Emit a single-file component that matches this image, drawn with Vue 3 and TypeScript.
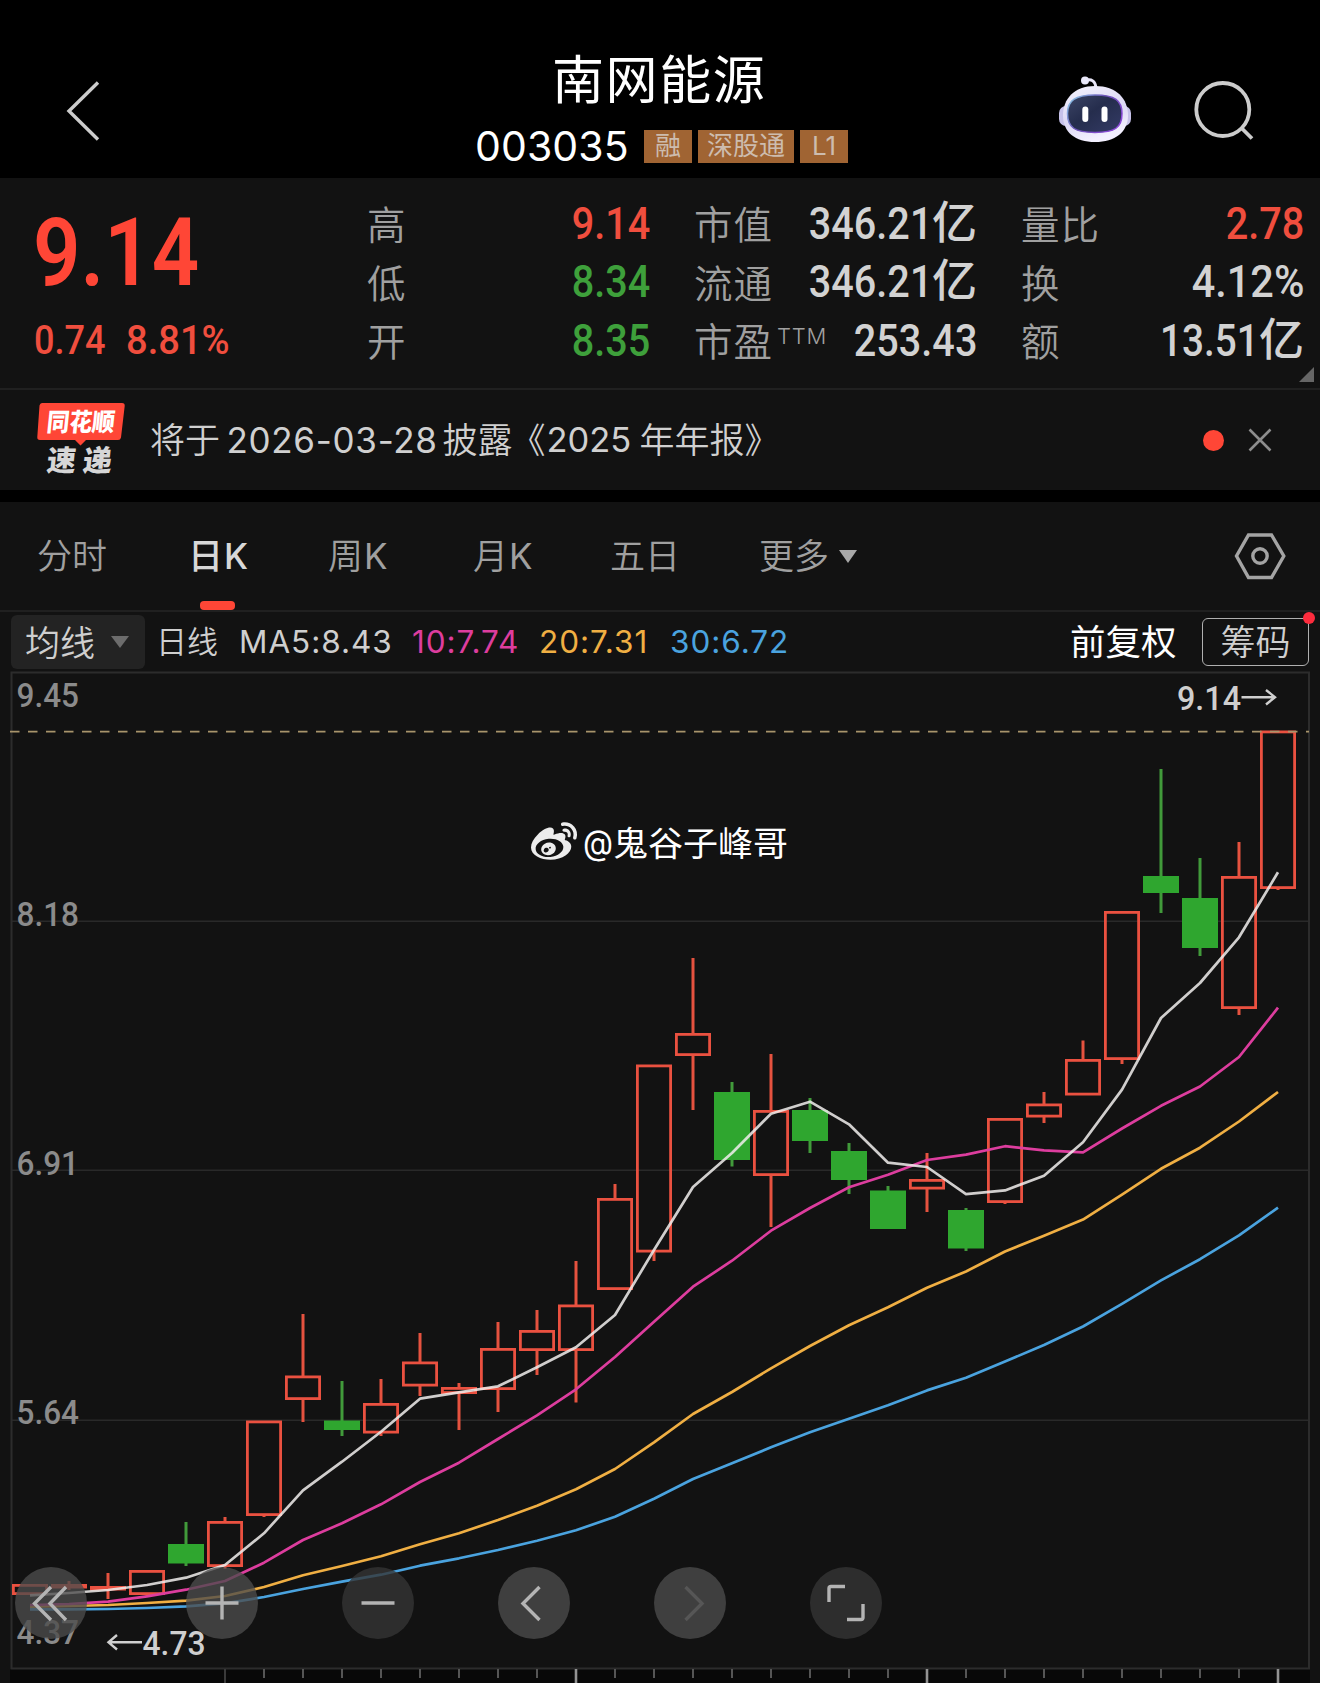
<script setup lang="ts">
interface Stat { label: string; sup?: string; num: string; unit?: string; tone: string; fit?: string }
interface Candle { hi: number; top: number; bottom: number; lo: number; up: boolean }

const statColumns: Stat[][] = [
  [
    { label: '高', num: '9.14', tone: 'red' },
    { label: '低', num: '8.34', tone: 'green' },
    { label: '开', num: '8.35', tone: 'green' },
  ],
  [
    { label: '市值', num: '346.21', unit: '亿', tone: 'plain' },
    { label: '流通', num: '346.21', unit: '亿', tone: 'plain' },
    { label: '市盈', sup: 'TTM', num: '253.43', tone: 'plain' },
  ],
  [
    { label: '量比', num: '2.78', tone: 'red' },
    { label: '换', num: '4.12%', tone: 'plain', fit: 'loose' },
    { label: '额', num: '13.51', unit: '亿', tone: 'plain', fit: 'tight' },
  ],
]

const tabs = [
  { cjk: '分时', latin: '', width: 151 },
  { cjk: '日', latin: 'K', width: 140, active: true },
  { cjk: '周', latin: 'K', width: 145 },
  { cjk: '月', latin: 'K', width: 137 },
  { cjk: '五日', latin: '', width: 149 },
  { cjk: '更多', latin: '', width: 120, more: true },
]

const raw: [number, number, number, number, number][] = [
  [1584, 1584, 1595, 1595, 1], [1581, 1584, 1588.5, 1590, 1], [1573, 1586, 1590.5, 1599, 1],
  [1570, 1570, 1595, 1596, 1], [1522, 1544, 1563.5, 1566, 0], [1517, 1521, 1567, 1569, 1],
  [1421, 1420.5, 1516, 1517, 1], [1314, 1375.5, 1400, 1422, 1], [1381, 1420.5, 1430, 1436, 0],
  [1379, 1403, 1433.5, 1436, 1], [1333, 1361.5, 1386.5, 1396, 1], [1383, 1387, 1394, 1430, 1],
  [1322, 1348, 1390, 1412, 1], [1310, 1330, 1351, 1375, 1], [1261, 1304.5, 1351, 1402.5, 1],
  [1184, 1198, 1290, 1290, 1], [1065, 1064.5, 1252.5, 1261, 1], [958, 1033, 1056, 1110, 1],
  [1082, 1092, 1160, 1166.5, 0], [1054, 1110, 1176, 1227, 1], [1098, 1110, 1141, 1153, 0],
  [1143, 1151, 1180, 1194, 0], [1186, 1190.5, 1229, 1229, 0], [1153, 1179, 1189.5, 1212, 1],
  [1208, 1210, 1248.5, 1251, 0], [1119, 1118, 1203, 1204, 1], [1092, 1103.5, 1117.5, 1123, 1],
  [1040.5, 1059, 1095.5, 1095, 1], [912, 911, 1060, 1064, 1], [769, 876, 893, 913, 0],
  [858, 898, 948, 956, 0], [842, 876, 1009, 1015, 1], [731, 730.5, 889, 890, 1],
]
const candles: Candle[] = raw.map(([hi, top, bottom, lo, up]) => ({ hi, top, bottom, lo, up: up === 1 }))
const cx = (i: number): number => 30 + 39 * i

const averages = [
  { color: '#4aa3df', ys: [1609.3, 1609.3, 1609, 1608, 1606.3, 1603.3, 1597, 1589, 1581.7, 1574.7, 1565.7, 1558.3, 1550, 1540.7, 1530.3, 1516.7, 1498.7, 1479, 1463.3, 1447.3, 1432.3, 1418.7, 1405.3, 1390.4, 1377.7, 1361.5, 1345, 1326.5, 1303.8, 1280.4, 1259.2, 1235.4, 1207.7] },
  { color: '#f0af43', ys: [1606.7, 1606, 1605, 1603, 1600.7, 1596, 1587, 1575.3, 1566, 1556.3, 1544.3, 1533.3, 1520, 1505.7, 1489.3, 1469, 1442.3, 1414, 1392, 1368.3, 1346, 1325.3, 1307.3, 1287.7, 1271.5, 1251.5, 1235.8, 1219.6, 1194.6, 1168.8, 1147.7, 1121.5, 1092] },
  { color: '#dd3d9e', ys: [1605, 1604, 1601.7, 1596.3, 1589.7, 1581, 1562.7, 1540, 1523.3, 1504.3, 1482, 1462.7, 1439, 1415.3, 1389.3, 1357, 1321.7, 1286.7, 1260.7, 1230.7, 1208, 1187.3, 1174.7, 1160, 1154.6, 1146.2, 1150.4, 1152.3, 1128.5, 1105.8, 1086.5, 1057, 1007.7] },
  { color: 'rgba(240,238,236,.86)', ys: [1595.3, 1593, 1590, 1585, 1577.7, 1565, 1533.3, 1490.3, 1461.7, 1431.7, 1398.7, 1392.3, 1386.3, 1367.3, 1347.3, 1315, 1250, 1187, 1153, 1113.7, 1101.7, 1124.3, 1162.7, 1167, 1194.2, 1190.4, 1175.8, 1142.3, 1089.6, 1018, 983, 937.3, 872.3] },
]
const polyline = (ys: number[]): string => ys.map((y, i) => `${cx(i)},${y}`).join(' ')

const axis = [
  { text: '9.45', y: 706.5 }, { text: '8.18', y: 925.5 }, { text: '6.91', y: 1174.8 },
  { text: '5.64', y: 1424 }, { text: '4.37', y: 1644 },
]
const ticks = candles.map((_, i) => i).filter((i) => i > 4)
const tickClass = (i: number): string => (i === 5 ? 'tick first' : [14, 23, 32].includes(i) ? 'tick major' : 'tick')
const tickEnd = (i: number): number => ([5, 14, 23, 32].includes(i) ? 1683 : 1678)

const controls = [
  { x: 51, dark: false, faint: false, d: 'M0 -16L-16.5 0.5L0 17M15 -16L-1 0.5L15 17' },
  { x: 222, dark: false, faint: false, d: 'M-16.5 0H16.5M0 -16.5V16.5' },
  { x: 378, dark: true, faint: false, d: 'M-16.5 0H16.5' },
  { x: 534, dark: false, faint: false, d: 'M5.5 -16L-11 0.5L5.5 17' },
  { x: 690, dark: false, faint: true, d: 'M-4.5 -16L12 0.5L-4.5 17' },
  { x: 846, dark: true, faint: false, d: 'M-17 -1V-14.5Q-17 -16.5 -15 -16.5H-1M17 1V14.5Q17 16.5 15 16.5H1' },
]
</script>

<template>
  <main class="page">
    <header class="top">
      <svg class="back" width="40" height="66" viewBox="62 78 40 66"><path d="M98 82.5L69 111L98 139.5" /></svg>
      <div class="title">
        <h1>南网能源</h1>
        <div class="sub">
          <span class="code">003035</span>
          <span class="badge">融</span>
          <span class="badge wide">深股通</span>
          <span class="badge">L1</span>
        </div>
      </div>
      <div class="actions">
        <svg width="76" height="72" viewBox="1057 74 76 72">
          <defs>
            <linearGradient id="shell" x1="0" y1="0" x2=".35" y2="1">
              <stop offset="0" stop-color="#f4f3fd" /><stop offset=".6" stop-color="#dcd8f4" /><stop offset="1" stop-color="#f3f0ff" />
            </linearGradient>
            <linearGradient id="rim" x1="0" y1="0" x2="1" y2=".6">
              <stop offset="0" stop-color="#8fd5ee" /><stop offset=".5" stop-color="#6d55b8" /><stop offset="1" stop-color="#8b49d8" />
            </linearGradient>
            <linearGradient id="visor" x1="0" y1="0" x2="1" y2="1">
              <stop offset="0" stop-color="#3c4566" /><stop offset=".45" stop-color="#252d4d" /><stop offset="1" stop-color="#343b66" />
            </linearGradient>
          </defs>
          <path d="M1085 80.500Q1095 77.500 1096 88" fill="none" stroke="#e8e6f8" stroke-width="3" />
          <circle cx="1085" cy="80.500" r="4" fill="#e9e8fa" />
          <rect x="1059" y="106" width="72" height="20" rx="7" fill="#c6c1e9" />
          <path d="M1095 86C1117 86 1128 99 1128 115.500C1128 132 1115 142 1095 142C1075 142 1063 132 1063 115.500C1063 99 1074 86 1095 86Z" fill="url(#shell)" />
          <path d="M1095 95C1115 95 1122 100.500 1122 113.500C1122 127.500 1115 132.500 1095 132.500C1075 132.500 1067.500 127.500 1067.500 113.500C1067.500 100.500 1075 95 1095 95Z" fill="url(#visor)" stroke="url(#rim)" stroke-width="1.500" />
          <rect x="1082.300" y="106.500" width="6" height="15.500" rx="3" fill="#fff" /><rect x="1101.500" y="106.500" width="6" height="15.500" rx="3" fill="#fff" />
        </svg>
        <svg class="search" width="64" height="64" viewBox="1192 78 64 64"><circle cx="1222.800" cy="109.500" r="26.500" /><path d="M1242 128.500L1252 138.500" /></svg>
      </div>
    </header>

    <section class="quote">
      <div class="last">
        <div class="price"><span>9.14</span></div>
        <div class="change"><span class="abs">0.74</span><span class="pct">8.81%</span></div>
      </div>
      <div v-for="(col, c) in statColumns" :key="c" class="stats" :class="'col' + c">
        <div v-for="s in col" :key="s.label" class="stat">
          <span class="label">{{ s.label }}<sup v-if="s.sup">{{ s.sup }}</sup></span>
          <span class="value" :class="s.tone"><span class="num" :class="s.fit">{{ s.num }}</span><span v-if="s.unit" class="unit">{{ s.unit }}</span></span>
        </div>
      </div>
      <i class="corner"></i>
    </section>

    <section class="news">
      <div class="logo">
        <svg width="90" height="44" viewBox="36 402 90 44">
          <path d="M42 403H122Q125 403 124.700 406L121 437.500Q120.500 440 118 440H86L80.500 445.500L75 440H40Q37 440 37.300 437L39.500 405.500Q40 403 42 403Z" fill="#ff4636" />
          <text x="47" y="431.500" textLength="68" lengthAdjust="spacingAndGlyphs" transform="skewX(-6)" style="transform-origin:80px 422px">同花顺</text>
        </svg>
        <b>速递</b>
      </div>
      <p class="notice">
        <span class="lead">将于</span><span class="latin date">2026-03-28</span><span class="verb">披露</span><span class="open">《</span><span class="latin year">2025</span><span>年年报》</span>
      </p>
      <i class="dot"></i>
      <svg class="dismiss" width="26" height="26" viewBox="0 0 26 26"><path d="M2.500 2.500L23.500 23.500M23.500 2.500L2.500 23.500" /></svg>
    </section>

    <nav class="tabs">
      <div v-for="t in tabs" :key="t.cjk" class="tab" :class="{ active: t.active }" :style="{ width: t.width + 'px' }">
        <span>{{ t.cjk }}<em v-if="t.latin">{{ t.latin }}</em><i v-if="t.more"></i></span>
      </div>
      <svg class="settings" width="54" height="50" viewBox="1233 531 54 50"><path d="M1248.500 535H1271.500L1283.800 556L1271.500 577.500H1248.500L1236.500 556Z" /><circle cx="1260" cy="556" r="7.200" /></svg>
    </nav>

    <section class="indicator">
      <div class="picker"><span>均线</span><i></i></div>
      <span class="period">日线</span>
      <span class="ma m5">MA5:8.43</span>
      <span class="ma m10">10:7.74</span>
      <span class="ma m20">20:7.31</span>
      <span class="ma m30">30:6.72</span>
      <span class="adjust">前复权</span>
      <span class="chips">筹码<i></i></span>
    </section>

    <svg class="chart" width="1320" height="1013" viewBox="0 670 1320 1013">
      <rect x="10" y="1669" width="1300" height="14" fill="#080808" />
      <path class="grid" d="M12 921.300H1309M12 1170.300H1309M12 1420.200H1309" />
      <rect x="11.500" y="672.500" width="1297.500" height="996" class="frame" />
      <line v-for="i in ticks" :key="'t' + i" :x1="cx(i)" :x2="cx(i)" y1="1669" :y2="tickEnd(i)" :class="tickClass(i)" />

      <g v-for="(k, i) in candles" :key="i" :class="k.up ? 'up' : 'down'">
        <line v-if="k.hi < k.top" :x1="cx(i)" :x2="cx(i)" :y1="k.hi" :y2="k.top + 1" />
        <line v-if="k.lo > k.bottom" :x1="cx(i)" :x2="cx(i)" :y1="k.bottom - 1" :y2="k.lo" />
        <rect v-if="k.up" :x="cx(i) - 16.600" :y="k.top + 1.400" width="33.200" :height="Math.max(1.500, k.bottom - k.top - 2.800)" />
        <rect v-else :x="cx(i) - 18" :y="k.top" width="36" :height="k.bottom - k.top" />
      </g>

      <line x1="10" x2="1309" y1="731.700" y2="731.700" class="last-price" />
      <polyline v-for="a in averages" :key="a.color" :points="polyline(a.ys)" :stroke="a.color" class="average" />

      <text v-for="a in axis" :key="a.text" x="16.500" :y="a.y" textLength="62.500" lengthAdjust="spacingAndGlyphs" class="axis">{{ a.text }}</text>
      <text x="1177" y="710" textLength="64" lengthAdjust="spacingAndGlyphs" class="mark">9.14</text>
      <path class="arrow" d="M1241.500 697.200H1275M1266 690L1275 697.200L1266 704.500" />
      <text x="142.500" y="1655" textLength="63" lengthAdjust="spacingAndGlyphs" class="mark">4.73</text>
      <path class="arrow" d="M142 1642.300H108.500M117 1635L108.500 1642.300L117 1649.500" />

      <g v-for="b in controls" :key="b.x" :transform="`translate(${b.x} 1603)`">
        <circle r="36" :class="b.dark ? 'pad dark' : 'pad'" />
        <path :d="b.d" :class="b.faint ? 'glyph faint' : 'glyph'" />
      </g>

      <g class="watermark">
        <path transform="translate(531 818) scale(1.920)" d="M10.098 20.323c-3.977.391-7.414-1.406-7.672-4.02-.259-2.609 2.759-5.047 6.740-5.441 3.979-.394 7.413 1.404 7.671 4.018.259 2.600-2.759 5.049-6.737 5.439l-.002.004zM9.050 17.219c-.384.616-1.208.884-1.829.602-.612-.279-.793-.991-.406-1.593.379-.595 1.176-.861 1.793-.601.622.263.820.972.442 1.592zm1.270-1.627c-.141.237-.449.353-.689.253-.236-.090-.313-.361-.177-.586.138-.227.436-.346.672-.240.239.090.315.360.180.601l.014-.028zm.176-2.719c-1.893-.493-4.033.450-4.857 2.118-.836 1.704-.026 3.591 1.886 4.210 1.983.640 4.318-.341 5.132-2.179.800-1.793-.201-3.642-2.161-4.149zm7.563-1.224c-.346-.105-.570-.180-.405-.615.375-.977.420-1.804 0-2.404-.781-1.112-2.915-1.053-5.364-.030 0 0-.766.331-.571-.271.376-1.217.315-2.224-.270-2.809-1.338-1.337-4.869.045-7.888 3.080C1.309 10.870 0 13.273 0 15.348c0 3.981 5.099 6.395 10.086 6.395 6.536 0 10.888-3.801 10.888-6.820 0-1.822-1.547-2.854-2.915-3.284v.010zm1.908-5.092c-.766-.856-1.908-1.187-2.960-.962-.436.090-.706.511-.616.932.090.420.511.691.932.602.511-.105 1.067.044 1.442.465.376.421.466.977.316 1.473-.136.406.089.856.510.992.405.119.857-.105.992-.512.330-1.021.120-2.178-.646-3.035l.030.045zm2.418-2.195c-1.576-1.757-3.905-2.419-6.054-1.968-.496.104-.812.587-.706 1.081.104.496.586.813 1.082.707 1.532-.331 3.185.150 4.296 1.383 1.112 1.246 1.429 2.943.947 4.416-.165.480.106 1.007.586 1.157.479.165.991-.104 1.157-.586.675-2.088.241-4.478-1.338-6.235l.030.045z" />
        <text x="583" y="854.500" textLength="30" lengthAdjust="spacingAndGlyphs">@</text>
        <text x="613" y="856" textLength="175" lengthAdjust="spacingAndGlyphs">鬼谷子峰哥</text>
      </g>
    </svg>
  </main>
</template>

<style>
body { background: #121212; }
</style>

<style scoped>
* { box-sizing: border-box; }
.page { width: 1320px; height: 1683px; overflow: hidden; background: #121212; color: #cfcfcf; font-family: Inter, "Noto Sans CJK SC", sans-serif; display: flex; flex-direction: column; }
h1, p { margin: 0; font-weight: 400; }
i, em { font-style: normal; }
svg { display: block; flex: none; }

.top { height: 178px; flex: none; background: #000; display: grid; grid-template-columns: 475px 1fr 266px; }
.back { margin: 78px 0 0 62px; fill: none; stroke: #ccc; stroke-width: 3.4; }
.title { padding-top: 46px; }
.title h1 { color: #fff; font-size: 52px; letter-spacing: 1.6px; line-height: 70px; padding-left: 77px; }
.sub { display: flex; align-items: center; height: 60px; }
.code { width: 169px; color: #fff; font-size: 41px; letter-spacing: .1px; line-height: 60px; font-weight: 400; }
.badge { width: 48px; height: 33px; margin-right: 6px; background: #a06433; color: #cdbcae; font-size: 26px; line-height: 32px; text-align: center; flex: none; font-weight: 400; }
.badge.wide { width: 96px; }
.actions { display: flex; padding-top: 74px; gap: 59px; padding-left: 3px; }
.search { margin-top: 4px; fill: none; stroke: #ccc; stroke-width: 3.8; }

.quote { height: 212px; flex: none; display: grid; grid-template-columns: 367px 283px 44px 283px 44px 283px; border-bottom: 2px solid #202020; position: relative; }
.last, .num { font-family: Roboto, sans-serif; }
.last { color: #ff4636; padding-left: 33px; }
.price { height: 137px; padding-top: 20px; font-size: 94px; line-height: 110px; font-weight: 600; }
.price span { display: inline-block; transform: scaleX(.885); transform-origin: left; }
.change { font-size: 41px; line-height: 50px; font-weight: 500; display: flex; }
.change span { transform: scaleX(.88); transform-origin: left; width: 92px; white-space: nowrap; color: #f04e3e; margin-left: 1px; }
.change .pct { transform: scaleX(.93); margin-left: 0; }
.stats { padding-top: 18px; }
.col1 { grid-column: 4; }
.col2 { grid-column: 6; }
.stat { height: 58.5px; display: flex; justify-content: space-between; align-items: center; white-space: nowrap; }
.label { color: #a0a0a0; font-size: 38.5px; letter-spacing: 1px; line-height: 58px; font-weight: 350; }
.label sup { font-size: 22px; letter-spacing: .7px; line-height: 0; vertical-align: 12px; margin-left: 4px; }
.value { display: flex; align-items: baseline; font-size: 45px; line-height: 58px; font-weight: 500; position: relative; top: -1.5px; }
.num { display: inline-block; transform: scaleX(.88); transform-origin: right; }
.num.loose { transform: scaleX(.92); }
.num.tight { transform: scaleX(.86); }
.unit { font-size: 45px; line-height: 50px; }
.red { color: #f04e3e; }
.green { color: #3ea03b; }
.plain { color: #d2d2d2; }
.corner { position: absolute; right: 6px; bottom: 6px; border-left: 15px solid transparent; border-bottom: 15px solid #666; }

.news { height: 100px; flex: none; display: flex; align-items: center; }
.logo { width: 150px; flex: none; padding-left: 36px; height: 100px; padding-top: 12px; }
.logo text { font-size: 25px; font-weight: 900; fill: #fff; }
.logo b { display: block; font-size: 29px; line-height: 30px; letter-spacing: 7px; font-weight: 900; color: #d6d6d6; padding-left: 11px; transform: skewX(-6deg); white-space: nowrap; }
.notice { display: flex; align-items: center; width: 1053px; flex: none; font-size: 35px; line-height: 50px; color: #d0d0d0; white-space: nowrap; font-weight: 350; margin-top: -1px; }
.latin { font-size: 35px; font-weight: 400; }
.lead { width: 76.5px; }
.date { width: 216px; letter-spacing: .7px; }
.verb { width: 68px; }
.open { width: 36px; }
.year { width: 93px; font-size: 34.5px; }
.dot { width: 21px; height: 21px; border-radius: 50%; background: #ff4636; flex: none; }
.dismiss { margin-left: 23px; fill: none; stroke: #8d8d8d; stroke-width: 2.6; }

.tabs { height: 122px; flex: none; border-top: 12px solid #000; border-bottom: 2px solid #202020; display: flex; padding-left: 37px; font-size: 35px; line-height: 108px; color: #a0a0a0; font-weight: 350; }
.tab { white-space: nowrap; flex: none; }
.tab em { margin-left: 1px; font-weight: 400; }
.tab.active em { font-weight: 500; }
.tab > span { display: inline-block; position: relative; }
.tab i { display: inline-block; border: 9px solid transparent; border-top: 13px solid #a8a8a8; border-bottom: 0; margin: 0 0 6px 10px; }
.active { color: #d8d8d8; font-weight: 500; }
.active > span::after { content: ""; position: absolute; left: 12px; top: 99px; width: 35px; height: 9px; border-radius: 4px; background: #ff4636; }
.settings { margin: 29px 0 0 354px; fill: none; stroke: #a4a4a4; stroke-width: 3.4; }

.indicator { height: 58px; flex: none; display: flex; align-items: center; padding: 2px 0 0 11px; white-space: nowrap; font-size: 32px; }
.picker { width: 134px; height: 54px; background: #232323; border-radius: 6px; padding-left: 14px; font-size: 35px; line-height: 52px; display: flex; align-items: center; margin-right: 11px; font-weight: 350; }
.picker span { margin-top: 1px; }
.picker i { border: 9px solid transparent; border-top: 12px solid #6c6c6c; border-bottom: 0; margin-left: 16px; }
.period { width: 83px; font-size: 31px; font-weight: 350; margin-bottom: 5px; }
.ma { font-size: 31.500px; letter-spacing: .95px; margin-bottom: 2px; }
.m5 { width: 173px; }
.m10 { width: 127px; color: #dd3d9e; }
.m20 { width: 131px; color: #f0af43; }
.m30 { width: 400px; color: #4aa3df; }
.adjust { color: #fff; font-size: 35.500px; width: 132px; margin-bottom: 5px; }
.chips { width: 107px; height: 48px; border: 1.500px solid #b0b0b0; border-radius: 6px; font-size: 35px; line-height: 47px; text-align: center; position: relative; font-weight: 350; }
.chips i { position: absolute; right: -7px; top: -7px; width: 12px; height: 12px; border-radius: 50%; background: #fd2c3d; }

.chart { display: block; }
.grid { stroke: #292929; stroke-width: 1.600; }
.frame { fill: none; stroke: #2c2c2c; stroke-width: 2; }
.tick { stroke: #555; stroke-width: 2; }
.tick.first { stroke: #3a3a3a; }
.tick.major { stroke: #929292; stroke-width: 2.600; }
.up line, .down line { stroke-width: 3; }
.up line { stroke: #e5523f; }
.up rect { fill: none; stroke: #ea5140; stroke-width: 2.800; }
.down line { stroke: #419a3a; }
.down rect { fill: #2fa62f; }
.last-price { stroke: #a8946b; stroke-width: 1.700; stroke-dasharray: 9.500 8.500; }
.average { fill: none; stroke-width: 2.700; stroke-linejoin: round; }
.axis, .mark { font-family: Roboto, sans-serif; font-size: 34px; font-weight: 500; fill: #8b8b8b; }
.mark { fill: #cfcfcf; }
.arrow { fill: none; stroke: #cfcfcf; stroke-width: 2.400; }
.pad { fill: rgba(75, 75, 75, .78); }
.pad.dark { fill: rgba(52, 52, 52, .8); }
.glyph { fill: none; stroke: #b4b4b4; stroke-width: 3.400; }
.glyph.faint { stroke: #565656; }
.watermark { fill: #ececec; }
.watermark text { fill: #fff; font-size: 34.500px; }
</style>
